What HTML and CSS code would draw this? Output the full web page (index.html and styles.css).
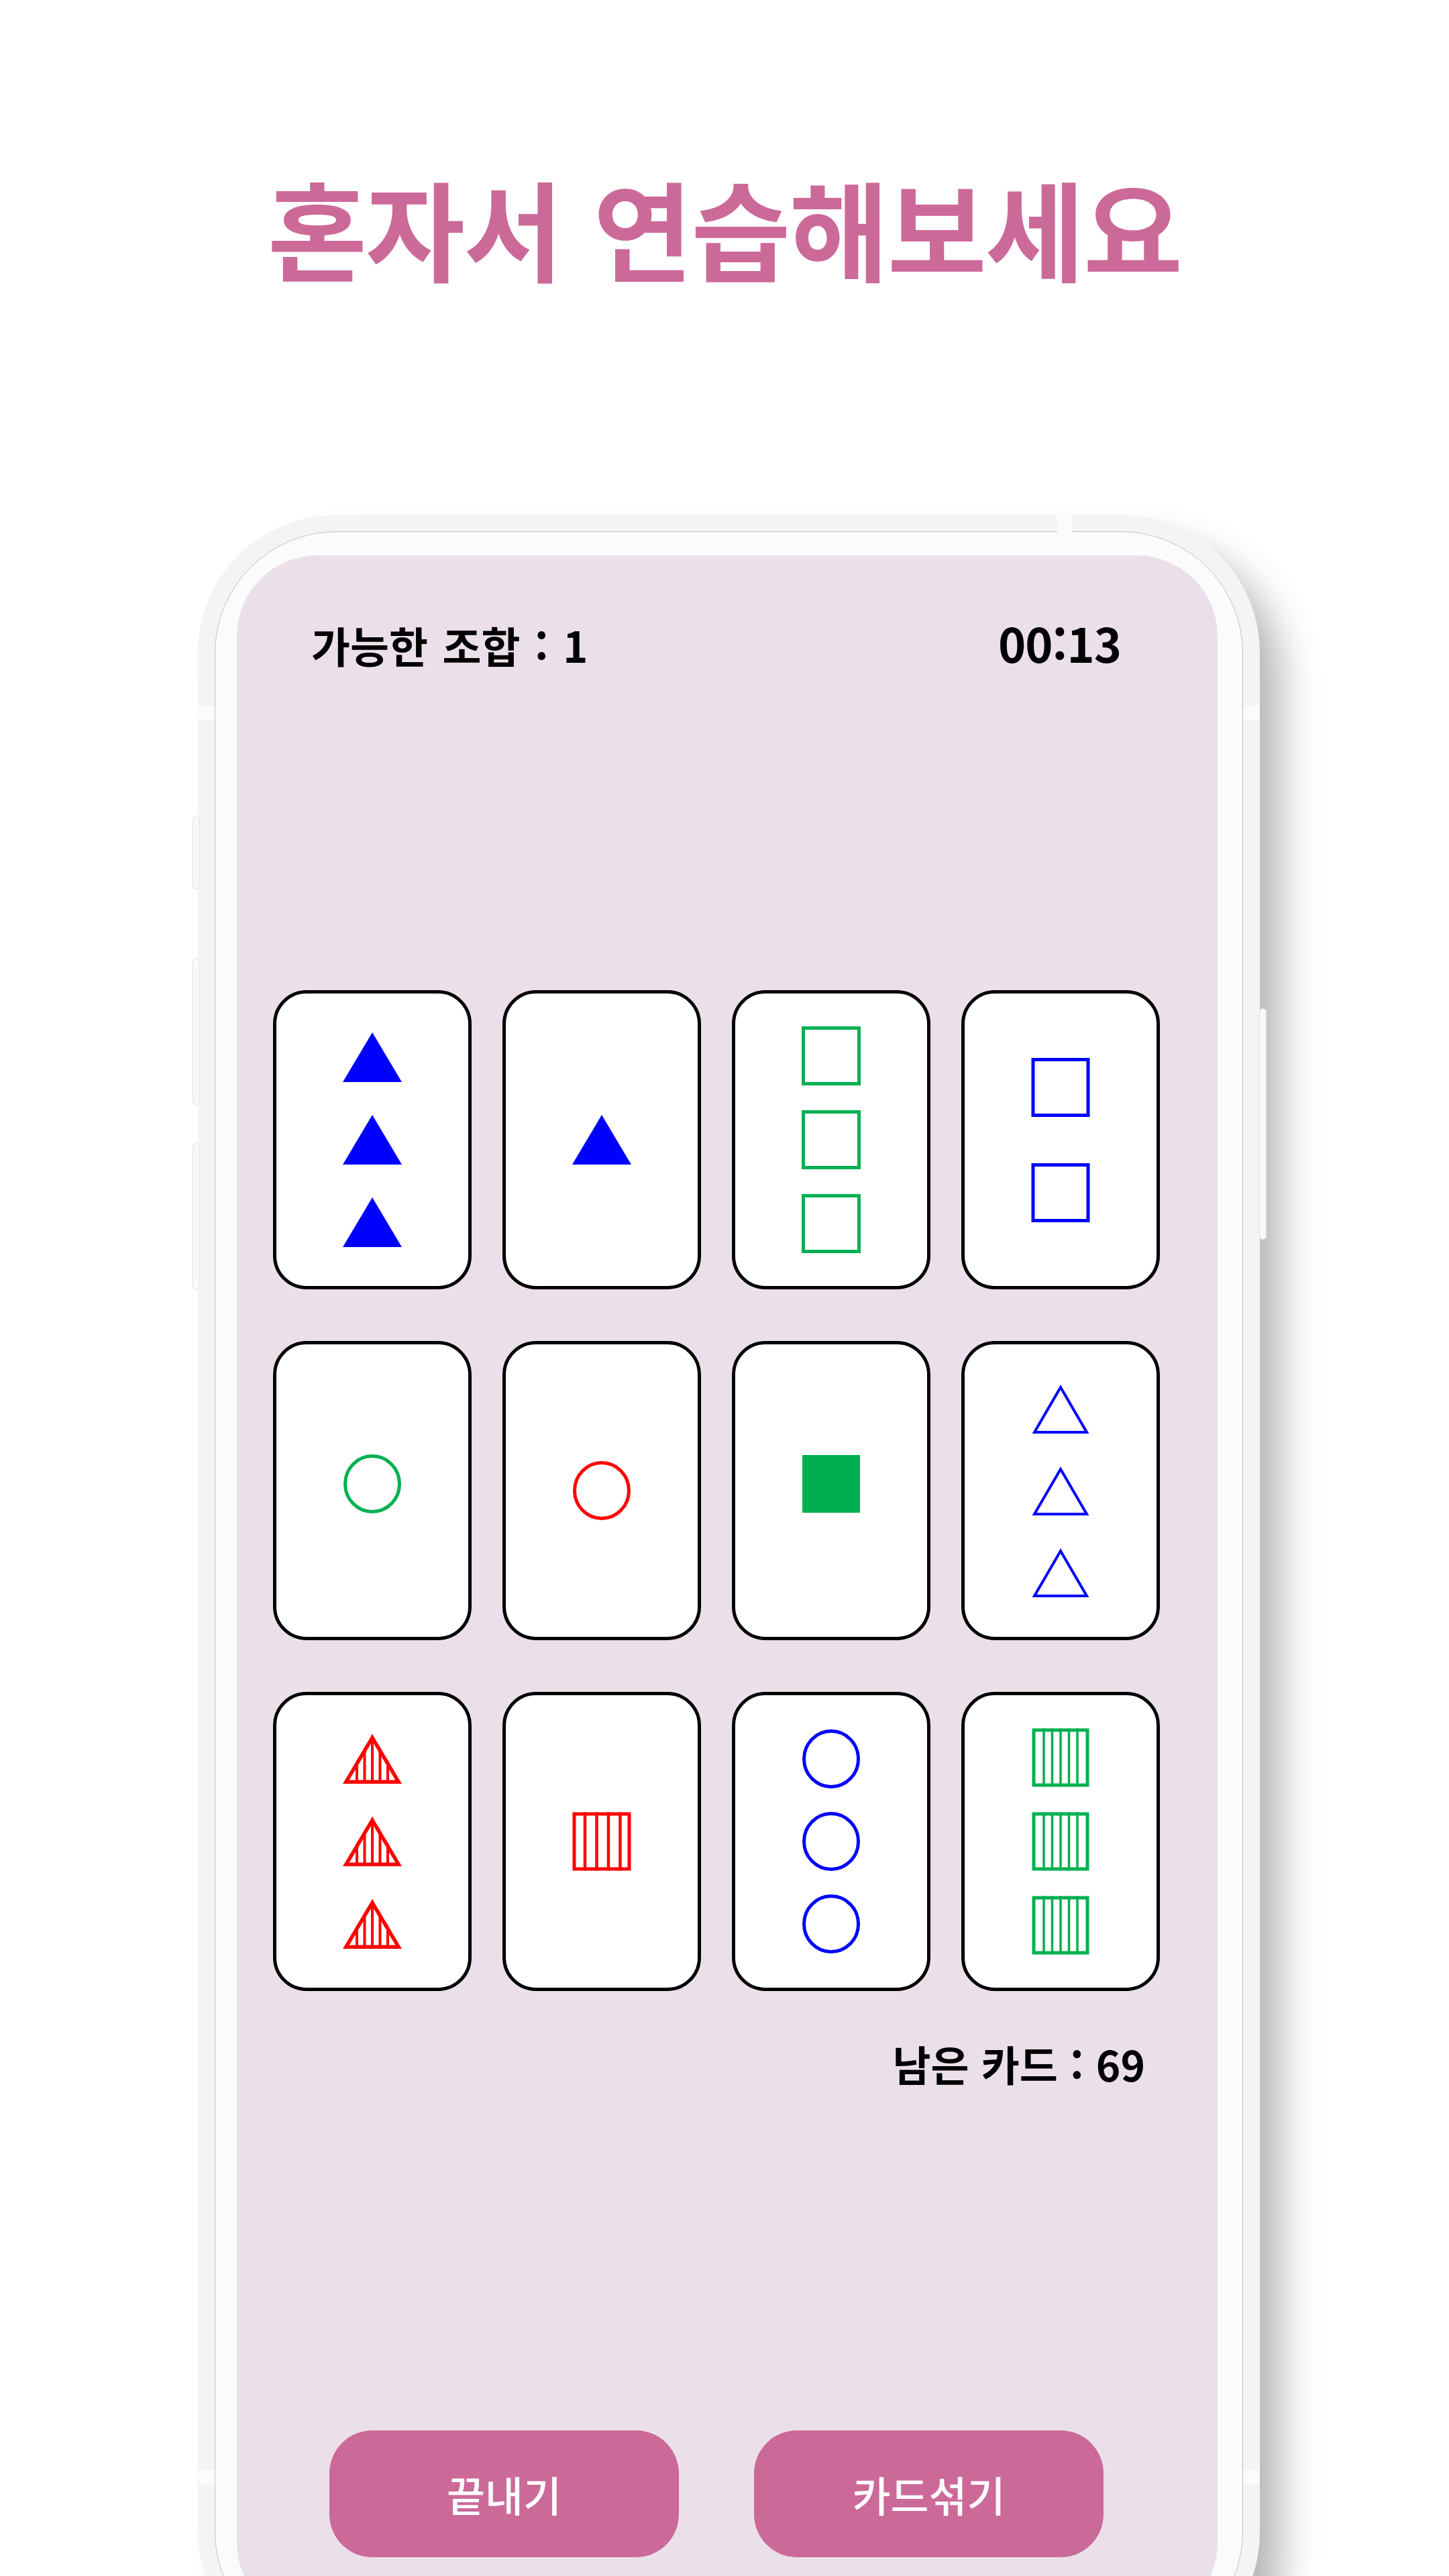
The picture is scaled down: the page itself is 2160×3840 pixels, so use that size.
FILE: index.html
```html
<!DOCTYPE html>
<html lang="ko">
<head>
<meta charset="utf-8">
<title>혼자서 연습해보세요</title>
<link rel="stylesheet" href="styles.css">
</head>
<body>
<svg class="defs" width="0" height="0" aria-hidden="true">
  <defs>
    <clipPath id="clip-tri"><polygon points="44,7 88,81 0,81"/></clipPath>
    <clipPath id="clip-sq-r"><rect x="0.5" y="0.5" width="87" height="87"/></clipPath>
    <clipPath id="clip-sq-g"><rect x="1.5" y="0.5" width="85" height="87"/></clipPath>
  </defs>
</svg>

<header class="hero">
  <h1 class="title">혼자서 연습해보세요</h1>
</header>

<div class="phone">
  <span class="side-btn left b1"></span>
  <span class="side-btn left b2"></span>
  <span class="side-btn left b3"></span>
  <span class="side-btn right b4"></span>
  <span class="band-break top"></span>
  <span class="band-break l1"></span>
  <span class="band-break r1"></span>
  <span class="band-break l2"></span>
  <span class="band-break r2"></span>

  <div class="bezel">
    <div class="screen">
      <div class="app">
        <div class="status">
          <span class="combo">가능한 조합 : 1</span>
          <span class="timer">00:13</span>
        </div>

        <div class="grid">
          <!-- row 1 -->
          <div class="card tight">
            <svg class="sh" viewBox="0 0 88 88"><polygon points="44,7 88,81 0,81" fill="#0000FF"/></svg>
            <svg class="sh" viewBox="0 0 88 88"><polygon points="44,7 88,81 0,81" fill="#0000FF"/></svg>
            <svg class="sh" viewBox="0 0 88 88"><polygon points="44,7 88,81 0,81" fill="#0000FF"/></svg>
          </div>
          <div class="card">
            <svg class="sh" viewBox="0 0 88 88"><polygon points="44,7 88,81 0,81" fill="#0000FF"/></svg>
          </div>
          <div class="card loose">
            <svg class="sh" viewBox="0 0 88 88"><rect x="2.5" y="2.5" width="83" height="83" fill="none" stroke="#00B050" stroke-width="5"/></svg>
            <svg class="sh" viewBox="0 0 88 88"><rect x="2.5" y="2.5" width="83" height="83" fill="none" stroke="#00B050" stroke-width="5"/></svg>
            <svg class="sh" viewBox="0 0 88 88"><rect x="2.5" y="2.5" width="83" height="83" fill="none" stroke="#00B050" stroke-width="5"/></svg>
          </div>
          <div class="card pair">
            <svg class="sh" viewBox="0 0 88 88"><rect x="3" y="2.5" width="82" height="83" fill="none" stroke="#0000FF" stroke-width="5"/></svg>
            <svg class="sh" viewBox="0 0 88 88"><rect x="3" y="2.5" width="82" height="83" fill="none" stroke="#0000FF" stroke-width="5"/></svg>
          </div>

          <!-- row 2 -->
          <div class="card up">
            <svg class="sh" viewBox="0 0 88 88"><ellipse cx="44" cy="44" rx="40.5" ry="41.5" fill="none" stroke="#00B050" stroke-width="5"/></svg>
          </div>
          <div class="card">
            <svg class="sh" viewBox="0 0 88 88"><ellipse cx="44" cy="44" rx="40.5" ry="41.5" fill="none" stroke="#FF0000" stroke-width="5"/></svg>
          </div>
          <div class="card up">
            <svg class="sh" viewBox="0 0 88 88"><rect x="1" y="1" width="86" height="86" fill="#00B050"/></svg>
          </div>
          <div class="card tight2">
            <svg class="sh" viewBox="0 0 88 88"><polygon points="44,12 83,79 5,79" fill="none" stroke="#0000FF" stroke-width="4"/></svg>
            <svg class="sh" viewBox="0 0 88 88"><polygon points="44,12 83,79 5,79" fill="none" stroke="#0000FF" stroke-width="4"/></svg>
            <svg class="sh" viewBox="0 0 88 88"><polygon points="44,12 83,79 5,79" fill="none" stroke="#0000FF" stroke-width="4"/></svg>
          </div>

          <!-- row 3 -->
          <div class="card tight">
            <svg class="sh" viewBox="0 0 88 88"><g clip-path="url(#clip-tri)" stroke="#FF0000"><line x1="21" y1="0" x2="21" y2="88" stroke-width="4"/><line x1="32.5" y1="0" x2="32.5" y2="88" stroke-width="4"/><line x1="44" y1="0" x2="44" y2="88" stroke-width="4"/><line x1="55.5" y1="0" x2="55.5" y2="88" stroke-width="4"/><line x1="67" y1="0" x2="67" y2="88" stroke-width="4"/><polygon points="44,7 88,81 0,81" fill="none" stroke-width="11"/></g></svg>
            <svg class="sh" viewBox="0 0 88 88"><g clip-path="url(#clip-tri)" stroke="#FF0000"><line x1="21" y1="0" x2="21" y2="88" stroke-width="4"/><line x1="32.5" y1="0" x2="32.5" y2="88" stroke-width="4"/><line x1="44" y1="0" x2="44" y2="88" stroke-width="4"/><line x1="55.5" y1="0" x2="55.5" y2="88" stroke-width="4"/><line x1="67" y1="0" x2="67" y2="88" stroke-width="4"/><polygon points="44,7 88,81 0,81" fill="none" stroke-width="11"/></g></svg>
            <svg class="sh" viewBox="0 0 88 88"><g clip-path="url(#clip-tri)" stroke="#FF0000"><line x1="21" y1="0" x2="21" y2="88" stroke-width="4"/><line x1="32.5" y1="0" x2="32.5" y2="88" stroke-width="4"/><line x1="44" y1="0" x2="44" y2="88" stroke-width="4"/><line x1="55.5" y1="0" x2="55.5" y2="88" stroke-width="4"/><line x1="67" y1="0" x2="67" y2="88" stroke-width="4"/><polygon points="44,7 88,81 0,81" fill="none" stroke-width="11"/></g></svg>
          </div>
          <div class="card">
            <svg class="sh" viewBox="0 0 88 88"><g clip-path="url(#clip-sq-r)" stroke="#FF0000"><line x1="19" y1="0" x2="19" y2="88" stroke-width="4.5"/><line x1="36.5" y1="0" x2="36.5" y2="88" stroke-width="4.5"/><line x1="54" y1="0" x2="54" y2="88" stroke-width="4.5"/><line x1="71.5" y1="0" x2="71.5" y2="88" stroke-width="4.5"/><rect x="0.5" y="0.5" width="87" height="87" fill="none" stroke-width="10"/></g></svg>
          </div>
          <div class="card tight">
            <svg class="sh" viewBox="0 0 88 88"><ellipse cx="44" cy="44" rx="40.5" ry="41.5" fill="none" stroke="#0000FF" stroke-width="5"/></svg>
            <svg class="sh" viewBox="0 0 88 88"><ellipse cx="44" cy="44" rx="40.5" ry="41.5" fill="none" stroke="#0000FF" stroke-width="5"/></svg>
            <svg class="sh" viewBox="0 0 88 88"><ellipse cx="44" cy="44" rx="40.5" ry="41.5" fill="none" stroke="#0000FF" stroke-width="5"/></svg>
          </div>
          <div class="card loose">
            <svg class="sh" viewBox="0 0 88 88"><g clip-path="url(#clip-sq-g)" stroke="#00B050"><line x1="19" y1="0" x2="19" y2="88" stroke-width="3.5"/><line x1="31.5" y1="0" x2="31.5" y2="88" stroke-width="3.5"/><line x1="44" y1="0" x2="44" y2="88" stroke-width="3.5"/><line x1="56.5" y1="0" x2="56.5" y2="88" stroke-width="3.5"/><line x1="69" y1="0" x2="69" y2="88" stroke-width="3.5"/><rect x="1.5" y="0.5" width="85" height="87" fill="none" stroke-width="10"/></g></svg>
            <svg class="sh" viewBox="0 0 88 88"><g clip-path="url(#clip-sq-g)" stroke="#00B050"><line x1="19" y1="0" x2="19" y2="88" stroke-width="3.5"/><line x1="31.5" y1="0" x2="31.5" y2="88" stroke-width="3.5"/><line x1="44" y1="0" x2="44" y2="88" stroke-width="3.5"/><line x1="56.5" y1="0" x2="56.5" y2="88" stroke-width="3.5"/><line x1="69" y1="0" x2="69" y2="88" stroke-width="3.5"/><rect x="1.5" y="0.5" width="85" height="87" fill="none" stroke-width="10"/></g></svg>
            <svg class="sh" viewBox="0 0 88 88"><g clip-path="url(#clip-sq-g)" stroke="#00B050"><line x1="19" y1="0" x2="19" y2="88" stroke-width="3.5"/><line x1="31.5" y1="0" x2="31.5" y2="88" stroke-width="3.5"/><line x1="44" y1="0" x2="44" y2="88" stroke-width="3.5"/><line x1="56.5" y1="0" x2="56.5" y2="88" stroke-width="3.5"/><line x1="69" y1="0" x2="69" y2="88" stroke-width="3.5"/><rect x="1.5" y="0.5" width="85" height="87" fill="none" stroke-width="10"/></g></svg>
          </div>
        </div>

        <div class="remaining">남은 카드 : 69</div>

        <div class="actions">
          <button class="btn" type="button">끝내기</button>
          <button class="btn" type="button">카드섞기</button>
        </div>
      </div>
    </div>
  </div>
</div>
</body>
</html>
```

FILE: styles.css
```css
html, body {
  margin: 0;
  padding: 0;
}

body {
  width: 2160px;
  height: 3840px;
  overflow: hidden;
  background: #ffffff;
  font-family: "Noto Sans CJK KR", "Noto Sans", sans-serif;
  color: #000;
}

.defs {
  position: absolute;
  width: 0;
  height: 0;
}

/* ---------- hero title ---------- */
.hero {
  height: 768px;
  box-sizing: border-box;
  padding-top: 257px;
}

.title {
  margin: 0;
  font-size: 161px;
  line-height: 1;
  font-weight: 700;
  color: #CB6A99;
  text-align: center;
  letter-spacing: -2px;
  word-spacing: 4px;
}

/* ---------- phone mockup ---------- */
.phone {
  position: relative;
  margin-left: 295px;
  width: 1583px;
  height: 3212px;
  box-sizing: border-box;
  padding: 24px 25px 24px 25px;
  border-radius: 205px;
  background: #F4F4F4;
  box-shadow: 42px 36px 60px -12px rgba(0, 0, 0, 0.30);
}

.bezel {
  height: 100%;
  box-sizing: border-box;
  border: 1.5px solid #C2C2C2;
  border-radius: 182px;
  background: #FBFBFB;
  padding: 35px 37px 45px 32px;
}

.side-btn {
  position: absolute;
  width: 11px;
  background: #F8F8F8;
  border: 1px solid #E3E3E3;
  border-radius: 6px;
  box-sizing: border-box;
}
.side-btn.left { left: -8px; }
.side-btn.right { right: -10px; }
.side-btn.b1 { top: 448px; height: 110px; }
.side-btn.b2 { top: 660px; height: 219px; }
.side-btn.b3 { top: 936px; height: 219px; }
.side-btn.b4 { top: 735px; height: 345px; }

.band-break {
  position: absolute;
  background: #FBFBFB;
}
.band-break.top { top: 0; left: 1281px; width: 21px; height: 25px; }
.band-break.l1, .band-break.r1 { top: 284px; height: 21px; width: 25px; }
.band-break.l2, .band-break.r2 { top: 2914px; height: 21px; width: 25px; }
.band-break.l1, .band-break.l2 { left: 0; }
.band-break.r1, .band-break.r2 { right: 0; }

.screen {
  height: 100%;
  box-sizing: border-box;
  border-radius: 120px;
  background: #EBE0EA;
  padding: 95px 86px 0 54px;
}

/* ---------- app ---------- */
.status {
  display: flex;
  justify-content: space-between;
  align-items: baseline;
  padding: 0 58px 0 57px;
  height: 62px;
}

.combo {
  font-size: 63px;
  line-height: 1;
  font-weight: 700;
  letter-spacing: 0;
  word-spacing: 4px;
}

.timer {
  font-size: 70px;
  line-height: 1;
  font-weight: 700;
  letter-spacing: -1px;
}

.grid {
  display: grid;
  grid-template-columns: repeat(4, 296px);
  column-gap: 46px;
  row-gap: 77px;
  margin-top: 491px;
}

.card {
  height: 446px;
  box-sizing: border-box;
  border: 5px solid #000;
  border-radius: 50px;
  background: #fff;
  display: flex;
  flex-direction: column;
  align-items: center;
  justify-content: center;
  gap: 36px;
}
.card.tight { gap: 35px; }
.card.tight2 { gap: 34px; }
.card.loose { gap: 37px; }
.card.pair { gap: 69px; }
.card.up { padding-bottom: 20px; }

.sh {
  display: block;
  width: 88px;
  height: 88px;
  flex: none;
}

.remaining {
  margin-top: 77px;
  padding-right: 22px;
  text-align: right;
  font-size: 62px;
  line-height: 1;
  font-weight: 700;
  letter-spacing: 0;
  word-spacing: 1px;
}

.actions {
  display: flex;
  justify-content: center;
  gap: 112px;
  margin-top: 516px;
}

.btn {
  width: 521px;
  height: 189px;
  border: 0;
  padding: 0;
  border-radius: 64px;
  background: #CB6A99;
  color: #fff;
  font-family: "Noto Sans CJK KR", "Noto Sans", sans-serif;
  font-size: 62px;
  font-weight: 500;
  line-height: 1;
}
```
